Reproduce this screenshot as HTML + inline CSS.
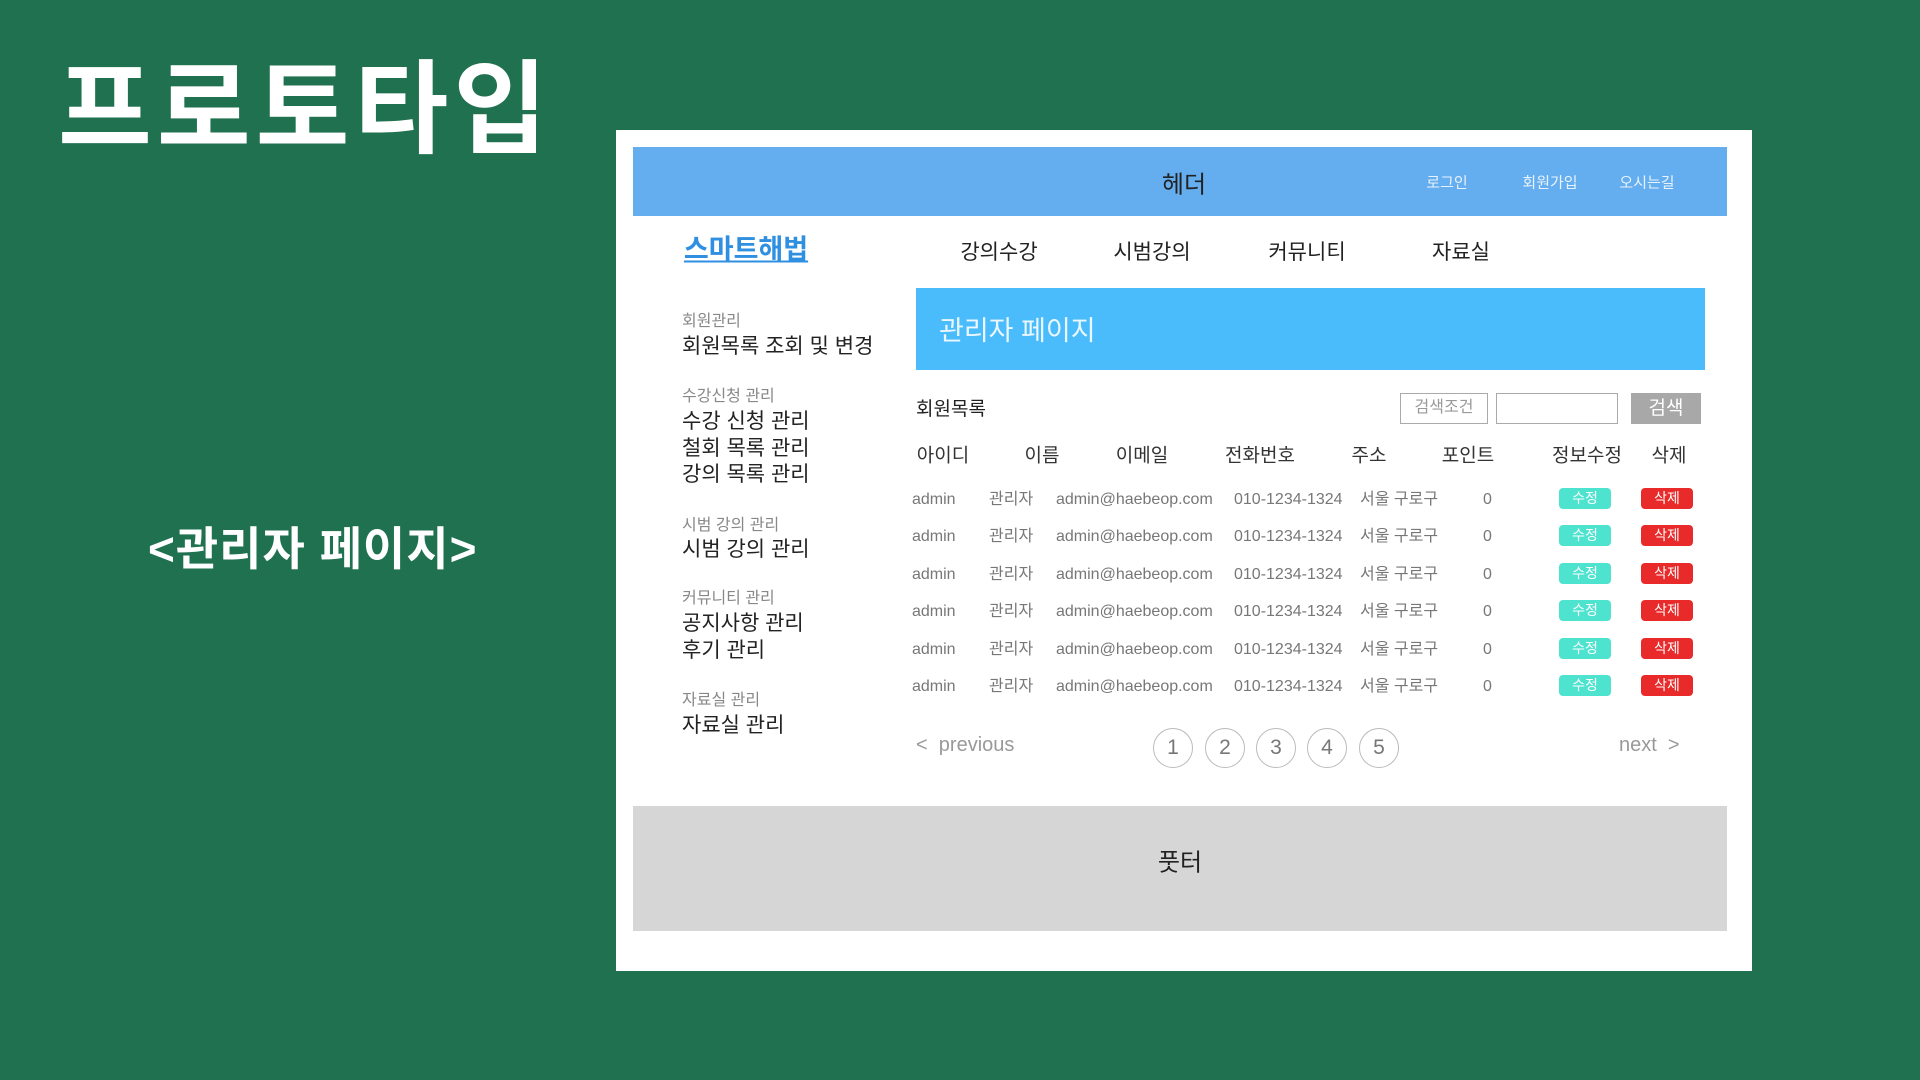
<!DOCTYPE html>
<html><head><meta charset="utf-8"><style>
*{margin:0;padding:0;box-sizing:border-box}
body{width:1920px;height:1080px;background:#1f7150;position:relative;overflow:hidden;font-family:"Liberation Sans","Noto Sans CJK KR",sans-serif}
.a{position:absolute;white-space:nowrap}
.title{left:58px;top:28px;font-size:102px;font-weight:bold;color:#fff;letter-spacing:5px}
.sub{left:148px;top:513px;font-size:46px;font-weight:bold;color:#fff;letter-spacing:1px}
.panel{left:616px;top:130px;width:1136px;height:841px;background:#fff}
.hdr{left:633px;top:147px;width:1094px;height:69px;background:#64aef0}
.c{transform:translate(-50%,-50%)}
.side1{font-size:16px;color:#888}
.side2{font-size:21px;color:#222}
.th{font-size:19px;color:#333}
.td{font-size:16px;color:#777;line-height:20px;height:20px}
.btn{height:21px;width:52px;border-radius:4px;color:#fff;font-size:14px;text-align:center;line-height:21px}
.circ{width:40px;height:40px;border:1.5px solid #bbb;border-radius:50%;font-size:21px;color:#777;text-align:center;line-height:37px}
</style></head><body>
<div class="a title">프로토타입</div>
<div class="a sub">&lt;관리자 페이지&gt;</div>
<div class="a panel"></div>
<div class="a hdr"></div>
<div class="a c" style="left:1184px;top:182px;font-size:24px;color:#222">헤더</div>
<div class="a c" style="left:1447px;top:182px;font-size:15px;color:#e8f2fc">로그인</div>
<div class="a c" style="left:1550px;top:182px;font-size:15px;color:#e8f2fc">회원가입</div>
<div class="a c" style="left:1647px;top:182px;font-size:15px;color:#e8f2fc">오시는길</div>
<div class="a c" style="left:746px;top:247px;font-size:27px;font-weight:bold;color:#2f8fe0;text-decoration:underline">스마트해법</div>
<div class="a c" style="left:999px;top:251px;font-size:21px;color:#222">강의수강</div>
<div class="a c" style="left:1152px;top:251px;font-size:21px;color:#222">시범강의</div>
<div class="a c" style="left:1307px;top:251px;font-size:21px;color:#222">커뮤니티</div>
<div class="a c" style="left:1461px;top:251px;font-size:21px;color:#222">자료실</div>
<div class="a" style="left:916px;top:288px;width:789px;height:82px;background:#4bbcfb"></div>
<div class="a" style="left:939px;top:309px;font-size:27px;color:#eaf7ff">관리자 페이지</div>

<div class="a side1" style="left:682px;top:307px">회원관리</div>
<div class="a side2" style="left:682px;top:330px">회원목록 조회 및 변경</div>
<div class="a side1" style="left:682px;top:382px">수강신청 관리</div>
<div class="a side2" style="left:682px;top:405px">수강 신청 관리</div>
<div class="a side2" style="left:682px;top:432px">철회 목록 관리</div>
<div class="a side2" style="left:682px;top:458px">강의 목록 관리</div>
<div class="a side1" style="left:682px;top:511px">시범 강의 관리</div>
<div class="a side2" style="left:682px;top:533px">시범 강의 관리</div>
<div class="a side1" style="left:682px;top:584px">커뮤니티 관리</div>
<div class="a side2" style="left:682px;top:607px">공지사항 관리</div>
<div class="a side2" style="left:682px;top:634px">후기 관리</div>
<div class="a side1" style="left:682px;top:686px">자료실 관리</div>
<div class="a side2" style="left:682px;top:709px">자료실 관리</div>

<div class="a" style="left:916px;top:394px;font-size:19px;color:#222">회원목록</div>
<div class="a" style="left:1400px;top:393px;width:88px;height:31px;border:1.5px solid #aaa;font-size:16px;color:#999;text-align:center;line-height:28px">검색조건</div>
<div class="a" style="left:1496px;top:393px;width:122px;height:31px;border:1.5px solid #aaa"></div>
<div class="a" style="left:1631px;top:393px;width:70px;height:31px;background:#a8a8a8;color:#fff;font-size:19px;text-align:center;line-height:31px">검색</div>

<div class="a th c" style="left:943px;top:454px">아이디</div>
<div class="a th c" style="left:1042px;top:454px">이름</div>
<div class="a th c" style="left:1142px;top:454px">이메일</div>
<div class="a th c" style="left:1260px;top:454px">전화번호</div>
<div class="a th c" style="left:1369px;top:454px">주소</div>
<div class="a th c" style="left:1468px;top:454px">포인트</div>
<div class="a th c" style="left:1587px;top:454px">정보수정</div>
<div class="a th c" style="left:1669px;top:454px">삭제</div>

<div id="rows"></div>
<script>
var h='',ys=[500,537,575,612,650,687];
ys.forEach(function(y){var t=y-10;
h+='<div class="a td" style="left:912px;top:'+t+'px">admin</div>'+
'<div class="a td" style="left:989px;top:'+t+'px">관리자</div>'+
'<div class="a td" style="left:1056px;top:'+t+'px">admin@haebeop.com</div>'+
'<div class="a td" style="left:1234px;top:'+t+'px">010-1234-1324</div>'+
'<div class="a td" style="left:1360px;top:'+t+'px">서울 구로구</div>'+
'<div class="a td" style="left:1483px;top:'+t+'px">0</div>'+
'<div class="a btn" style="left:1559px;top:'+(y-12)+'px;background:#4de3cf">수정</div>'+
'<div class="a btn" style="left:1641px;top:'+(y-12)+'px;background:#e82a2a">삭제</div>';});
document.getElementById('rows').outerHTML=h;
</script>

<div class="a" style="left:916px;top:734px;font-size:20px;color:#999">&lt;&nbsp; previous</div>
<div class="a circ c" style="left:1173px;top:748px">1</div>
<div class="a circ c" style="left:1225px;top:748px">2</div>
<div class="a circ c" style="left:1276px;top:748px">3</div>
<div class="a circ c" style="left:1327px;top:748px">4</div>
<div class="a circ c" style="left:1379px;top:748px">5</div>
<div class="a" style="left:1619px;top:734px;font-size:20px;color:#999">next &nbsp;&gt;</div>

<div class="a" style="left:633px;top:806px;width:1094px;height:125px;background:#d6d6d6"></div>
<div class="a c" style="left:1180px;top:860px;font-size:24px;color:#222">풋터</div>
</body></html>
